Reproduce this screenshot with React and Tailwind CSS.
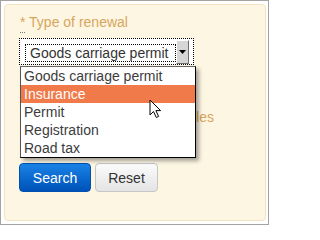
import React from "react";

export default function App() {
  const items = ["Goods carriage permit", "Insurance", "Permit", "Registration", "Road tax"];
  return (
    <div
      className="relative box-border w-[269px] min-w-[269px] max-w-[269px] h-[225px] overflow-hidden border border-[#a3a3a3] bg-white pt-[3px] pl-[3px] pr-[2px] pb-[3px]"
      style={{ fontFamily: '"Liberation Sans", Arial, sans-serif' }}
    >
      <div className="h-full w-full rounded-[4px] border border-[#f3e4c1] bg-[#fdf6e3] pl-[14px] pt-[7px]">
        <div className="ml-[1px] h-[20px] leading-[20px] text-[14px] text-[#d7a65d]">
          <span className="border-b border-dotted border-[#777] pb-[2px]">*</span> Type of renewal
        </div>
        <div className="relative mt-[6px] flex w-[175px] h-[27px] items-start border border-dotted border-black bg-white">
          <div className="mt-[5px] ml-[5px] w-[151px] h-[18px] border border-dotted border-black pl-[4px] text-[14px] leading-[16px] text-[#333] whitespace-nowrap overflow-hidden">
            Goods carriage permit
          </div>
          <div className="mt-[1px] flex w-[13px] h-[24px] items-center justify-center border border-t-white border-l-white border-r-[#6f6f6f] border-b-[#6f6f6f] bg-[#d6d6d6]">
            <svg width="7" height="4" viewBox="0 0 7 4">
              <path d="M0 0 H7 L3.5 4 Z" fill="#000" />
            </svg>
          </div>
          <div className="absolute left-0 top-[27px] z-10 w-[176px] border border-black border-t-[#666] border-l-[#555] bg-white shadow-[3px_3px_4px_rgba(0,0,0,0.35)]">
            {items.map((it) => (
              <div
                key={it}
                className={
                  it === "Insurance"
                    ? "h-[18px] pl-[3px] text-[14px] leading-[18px] text-white bg-[#f07a4a] whitespace-nowrap"
                    : "h-[18px] pl-[3px] text-[14px] leading-[18px] text-[#3c3c3c] whitespace-nowrap"
                }
              >
                {it}
              </div>
            ))}
          </div>
        </div>
        <div className="mt-[42px] w-[195px] h-[20px] text-right text-[14px] leading-[20px] text-[#d7a65d] whitespace-nowrap">
          Vehicles
        </div>
        <div className="mt-[36px] flex gap-[4px]">
          <button className="w-[72px] h-[29px] rounded-[4px] border border-[#0050b3] bg-gradient-to-b from-[#1a82e6] to-[#0052b8] text-[14px] leading-[20px] text-white">
            Search
          </button>
          <button className="w-[63px] h-[29px] rounded-[4px] border border-[#c6c6c6] bg-gradient-to-b from-[#fbfbfb] to-[#e4e4e4] text-[14px] leading-[20px] text-[#333]">
            Reset
          </button>
        </div>
      </div>
      <svg
        className="absolute left-[148px] top-[98px] z-20"
        width="13"
        height="20"
        viewBox="0 0 13 20"
      >
        <path d="M1 1 L1 16 L4.5 12.5 L7.3 18.5 L9.6 17.4 L6.9 11.6 L11.6 11.6 Z" fill="#fff" stroke="#000" strokeWidth="1" />
      </svg>
    </div>
  );
}
